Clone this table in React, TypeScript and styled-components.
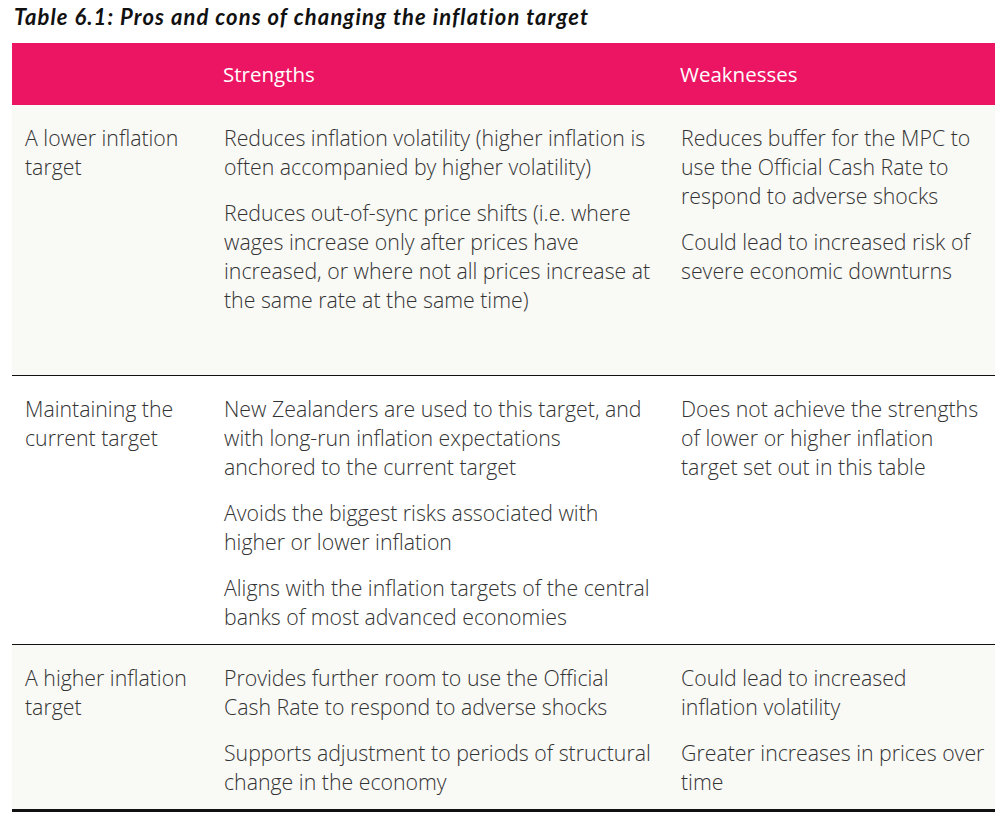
import React from 'react';
import styled, { createGlobalStyle } from 'styled-components';

const GlobalStyle = createGlobalStyle`
  body {
    margin: 0;
    background: #ffffff;
    font-family: "Open Sans", "Noto Sans", sans-serif;
  }
`;

const Page = styled.div`
  width: 1004px;
  padding: 3px 9px 0 12px;
  box-sizing: border-box;
`;

const Caption = styled.h2`
  margin: 0 0 12px 2px;
  font-family: Lato, "Open Sans", sans-serif;
  font-style: italic;
  font-weight: 700;
  font-size: 22px;
  letter-spacing: 1.08px;
  line-height: 28px;
  color: #111;
`;

const Table = styled.div`
  display: grid;
  grid-template-columns: 199px 457px 327px;
  border-bottom: 3px solid #111;
`;

const HeadCell = styled.div`
  background: #ec1563;
  color: #ffffff;
  font-size: 20.5px;
  font-weight: 400;
  height: 62px;
  display: flex;
  align-items: center;
  padding: 0 12px;
`;

const Row = styled.div<{ $shaded?: boolean; $minHeight?: number; $last?: boolean }>`
  display: contents;
  & > div {
    background: ${p => (p.$shaded ? '#f9f9f6' : '#ffffff')};
    min-height: ${p => (p.$minHeight ? `${p.$minHeight}px` : 'auto')};
    border-bottom: ${p => (p.$last ? 'none' : '1px solid #111')};
  }
`;

const Cell = styled.div<{ $padRight?: number }>`
  box-sizing: border-box;
  padding: 18px ${p => p.$padRight ?? 14}px 13px 13px;
  color: #333333;
  font-size: 21.3px;
  font-weight: 300;
  line-height: 29px;
`;

const Para = styled.p`
  margin: 0 0 17px;
  &:last-child {
    margin-bottom: 0;
  }
`;

type RowData = {
  label: string;
  strengths: string[];
  weaknesses: string[];
  shaded: boolean;
  minHeight?: number;
};

const rows: RowData[] = [
  {
    label: 'A lower inflation target',
    strengths: [
      'Reduces inflation volatility (higher inflation is often accompanied by higher volatility)',
      'Reduces out-of-sync price shifts (i.e. where wages increase only after prices have increased, or where not all prices increase at the same rate at the same time)',
    ],
    weaknesses: [
      'Reduces buffer for the MPC to use the Official Cash Rate to respond to adverse shocks',
      'Could lead to increased risk of severe economic downturns',
    ],
    shaded: true,
    minHeight: 271,
  },
  {
    label: 'Maintaining the current target',
    strengths: [
      'New Zealanders are used to this target, and with long-run inflation expectations anchored to the current target',
      'Avoids the biggest risks associated with higher or lower inflation',
      'Aligns with the inflation targets of the central banks of most advanced economies',
    ],
    weaknesses: [
      'Does not achieve the strengths of lower or higher inflation target set out in this table',
    ],
    shaded: false,
  },
  {
    label: 'A higher inflation target',
    strengths: [
      'Provides further room to use the Official Cash Rate to respond to adverse shocks',
      'Supports adjustment to periods of structural change in the economy',
    ],
    weaknesses: [
      'Could lead to increased inflation volatility',
      'Greater increases in prices over time',
    ],
    shaded: true,
  },
];

const App: React.FC = () => {
  return (
    <Page>
      <GlobalStyle />
      <Caption>Table 6.1: Pros and cons of changing the inflation target</Caption>
      <Table>
        <HeadCell />
        <HeadCell>Strengths</HeadCell>
        <HeadCell>Weaknesses</HeadCell>

        {rows.map((row, i) => (
          <Row key={row.label} $shaded={row.shaded} $minHeight={row.minHeight} $last={i === rows.length - 1}>
            <Cell>{row.label}</Cell>
            <Cell>
              {row.strengths.map(s => (
                <Para key={s}>{s}</Para>
              ))}
            </Cell>
            <Cell $padRight={8}>
              {row.weaknesses.map(w => (
                <Para key={w}>{w}</Para>
              ))}
            </Cell>
          </Row>
        ))}
      </Table>
    </Page>
  );
};

export default App;
